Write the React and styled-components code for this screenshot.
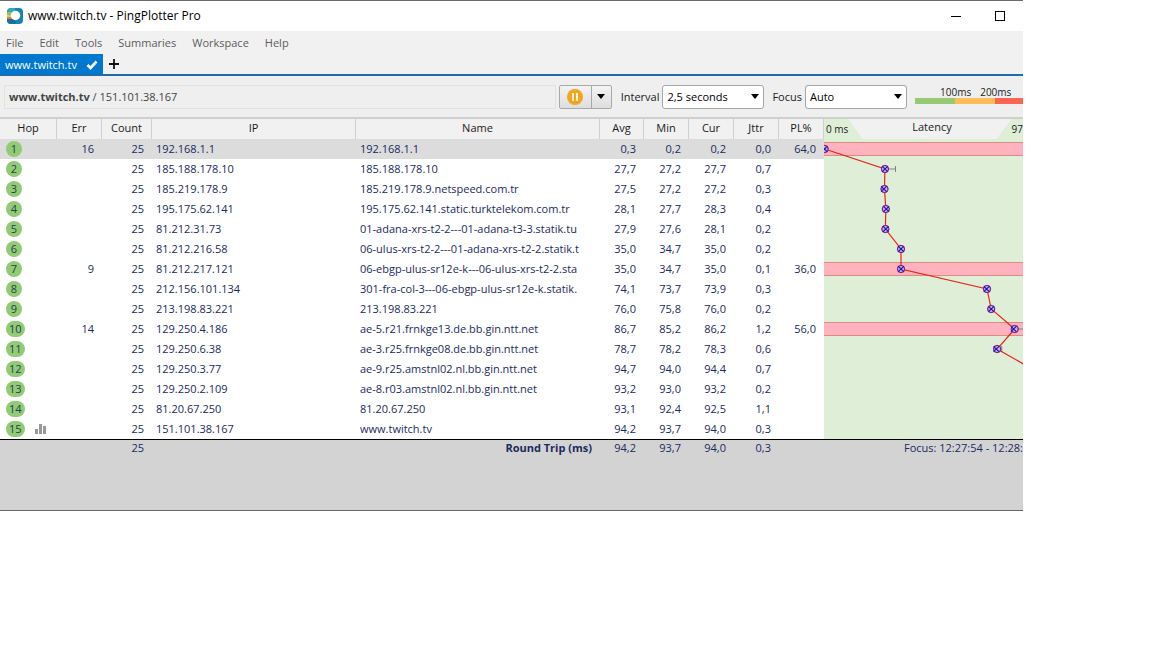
import React, { useState } from 'react';
import styled, { createGlobalStyle } from 'styled-components';

const GlobalStyle = createGlobalStyle`
  * {
    box-sizing: border-box;
  }

  body {
    margin: 0;
    background: #fff;
    font-family: 'Open Sans', 'Noto Sans', sans-serif;
    font-size: 11px;
    line-height: 20px;
    color: #1a1a1a;
  }

  button, input, select {
    font: inherit;
    color: inherit;
  }
`;

const PX_PER_MS = 2.2;
const ROW = 20;

const hops = [
  { err: '16', ip: '192.168.1.1', name: '192.168.1.1', avg: '0,3', min: '0,2', cur: '0,2', jttr: '0,0', pl: '64,0' },
  { ip: '185.188.178.10', name: '185.188.178.10', avg: '27,7', min: '27,2', cur: '27,7', jttr: '0,7', max: '32,5' },
  { ip: '185.219.178.9', name: '185.219.178.9.netspeed.com.tr', avg: '27,5', min: '27,2', cur: '27,2', jttr: '0,3' },
  { ip: '195.175.62.141', name: '195.175.62.141.static.turktelekom.com.tr', avg: '28,1', min: '27,7', cur: '28,3', jttr: '0,4' },
  { ip: '81.212.31.73', name: '01-adana-xrs-t2-2---01-adana-t3-3.statik.tu', avg: '27,9', min: '27,6', cur: '28,1', jttr: '0,2' },
  { ip: '81.212.216.58', name: '06-ulus-xrs-t2-2---01-adana-xrs-t2-2.statik.t', avg: '35,0', min: '34,7', cur: '35,0', jttr: '0,2' },
  { err: '9', ip: '81.212.217.121', name: '06-ebgp-ulus-sr12e-k---06-ulus-xrs-t2-2.sta', avg: '35,0', min: '34,7', cur: '35,0', jttr: '0,1', pl: '36,0' },
  { ip: '212.156.101.134', name: '301-fra-col-3---06-ebgp-ulus-sr12e-k.statik.', avg: '74,1', min: '73,7', cur: '73,9', jttr: '0,3' },
  { ip: '213.198.83.221', name: '213.198.83.221', avg: '76,0', min: '75,8', cur: '76,0', jttr: '0,2' },
  { err: '14', ip: '129.250.4.186', name: 'ae-5.r21.frnkge13.de.bb.gin.ntt.net', avg: '86,7', min: '85,2', cur: '86,2', jttr: '1,2', pl: '56,0', max: '96,0' },
  { ip: '129.250.6.38', name: 'ae-3.r25.frnkge08.de.bb.gin.ntt.net', avg: '78,7', min: '78,2', cur: '78,3', jttr: '0,6', max: '80,8' },
  { ip: '129.250.3.77', name: 'ae-9.r25.amstnl02.nl.bb.gin.ntt.net', avg: '94,7', min: '94,0', cur: '94,4', jttr: '0,7' },
  { ip: '129.250.2.109', name: 'ae-8.r03.amstnl02.nl.bb.gin.ntt.net', avg: '93,2', min: '93,0', cur: '93,2', jttr: '0,2' },
  { ip: '81.20.67.250', name: '81.20.67.250', avg: '93,1', min: '92,4', cur: '92,5', jttr: '1,1' },
  { ip: '151.101.38.167', name: 'www.twitch.tv', avg: '94,2', min: '93,7', cur: '94,0', jttr: '0,3', chart: true },
];

const toX = (ms) => parseFloat(ms.replace(',', '.')) * PX_PER_MS;

const Window = styled.main`
  margin-right: 129px;
  border-top: 1px solid #6b6b6b;
  border-bottom: 1px solid #66666f;
  background: #f1f1f1;
  overflow: hidden;
`;

const TitleBar = styled.header`
  display: flex;
  align-items: center;
  gap: 5px;
  height: 30px;
  padding: 0 17px 0 6px;
  background: #fff;
  color: #000;
`;

const Title = styled.h1`
  flex: 1;
  margin: 0;
  font-size: 12px;
  font-weight: 400;
`;

const WindowButton = styled.button`
  display: flex;
  padding: 0;
  border: 0;
  background: none;
  margin-left: 29px;
`;

const MenuBar = styled.nav`
  display: flex;
  gap: 16px;
  height: 23px;
  align-items: center;
  padding: 0 6px;
`;

const MenuLink = styled.a`
  color: #5c5c5c;
  text-decoration: none;
`;

const TabBar = styled.div`
  display: flex;
  align-items: stretch;
  height: 22px;
  border-bottom: 2px solid #1f6cab;
`;

const Tab = styled.button`
  display: flex;
  align-items: center;
  justify-content: space-between;
  width: 103px;
  padding: 2px 5px 0;
  border: 0;
  background: #0078d0;
  color: #fff;
`;

const AddTab = styled.button`
  display: flex;
  align-items: center;
  padding: 0 5px;
  border: 0;
  background: none;
`;

const Toolbar = styled.div`
  display: flex;
  align-items: center;
  height: 41px;
  padding-left: 4px;
  background: #efefef;
  white-space: nowrap;
`;

const Target = styled.div`
  flex: 1;
  height: 24px;
  padding: 0 4px;
  border: 1px solid #e2e2e2;
  line-height: 22px;
  color: #444;
`;

const SplitButton = styled.div`
  display: flex;
  height: 24px;
  margin: 0 9px 0 3px;
  border: 1px solid #a9a9a9;
  border-radius: 2px;
  background: linear-gradient(#f3f3f3, #dedede);
`;

const SplitPart = styled.button`
  display: flex;
  align-items: center;
  justify-content: center;
  width: ${(p) => p.$width}px;
  padding: 0;
  border: 0;
  border-left: ${(p) => (p.$divided ? '1px solid #a9a9a9' : '0')};
  background: none;
`;

const Field = styled.label`
  display: flex;
  align-items: center;
  gap: 3px;
  margin-right: 8px;
`;

const SelectBox = styled.select`
  appearance: none;
  width: 102px;
  height: 24px;
  padding: 0 4px;
  border: 1px solid #a6a6a6;
  border-radius: 3px;
  color: #000;
  background: #fff
    url("data:image/svg+xml,%3Csvg xmlns='http://www.w3.org/2000/svg' width='8' height='5'%3E%3Cpath d='M0 0h8L4 5z'/%3E%3C/svg%3E")
    no-repeat right 4px center;
`;

const Legend = styled.div`
  width: 108px;
  height: 24px;
  overflow: hidden;
  font-size: 10px;
  line-height: 12px;
`;

const LegendLabels = styled.div`
  display: flex;
  gap: 9px;
  padding: 1px 0 0 25px;
`;

const LegendBar = styled.div`
  height: 6px;
  background: linear-gradient(90deg, #96ca72 40px, #fbbd58 40px 80px, #fb6450 80px);
`;

const Trace = styled.section`
  display: flex;
  border-top: 2px solid #cfcfcf;
`;

const HopTable = styled.table`
  width: 824px;
  flex: none;
  table-layout: fixed;
  border-collapse: separate;
  border-spacing: 0;
  background: #fff;
  color: #1b2a5e;
`;

const HeadCell = styled.th`
  width: ${(p) => p.$width}px;
  height: 20px;
  padding: 0 0 2px;
  border-right: 1px solid #d0d0d0;
  background: #f1f1f1;
  color: #1a1a1a;
  font-weight: 400;
  line-height: 18px;
`;

const Row = styled.tr`
  background: ${(p) => (p.$selected ? '#dcdcdc' : '#fff')};
`;

const Cell = styled.td`
  height: ${ROW}px;
  padding: 0 8px 0 4px;
  overflow: hidden;
  line-height: ${ROW}px;
  white-space: nowrap;
  text-align: ${(p) => (p.$left ? 'left' : 'right')};
`;

const HopCell = styled.div`
  display: flex;
  align-items: center;
  gap: 10px;
  padding-left: 2px;
`;

const HopBadge = styled.span`
  min-width: 16px;
  height: 16px;
  padding: 0 3px;
  border-radius: 8px;
  background: #92cb74;
  color: #20405a;
  line-height: 15px;
  text-align: center;
`;

const Latency = styled.div`
  flex: 1;
  min-width: 0;
  overflow: hidden;
  background: #dfeed6;
`;

const LatencyHead = styled.div`
  display: flex;
  height: 20px;
  padding-left: 2px;
  font-size: 10px;
  white-space: nowrap;
`;

const LatencyTitle = styled.div`
  flex: 1;
  padding-left: 4px;
  background: #f1f1f1;
  clip-path: polygon(0 0, 100% 0, calc(100% - 15px) 100%, 14px 100%);
  font-size: 11px;
  line-height: 15px;
  text-align: center;
`;

const Graph = styled.svg`
  display: block;
  width: 100%;
  height: 300px;
`;

const Summary = styled.footer`
  display: flex;
  height: 71px;
  border-top: 1px solid #000;
  background: #d3d3d3;
  color: #1b2a5e;
  line-height: 16px;
  white-space: nowrap;
  overflow: hidden;
`;

const SummaryCell = styled.span`
  flex: none;
  width: ${(p) => p.$width}px;
  padding-right: 8px;
  font-weight: ${(p) => (p.$bold ? 700 : 400)};
  text-align: right;
`;

const FocusRange = styled.span`
  flex: 1;
  text-align: right;
`;

const DownArrow = () => (
  <svg width="8" height="5" viewBox="0 0 8 5">
    <path d="M0 0h8L4 5z" />
  </svg>
);

const Logo = () => (
  <svg width="17" height="17" viewBox="0 0 17 17">
    <rect x="1" y="0" width="16" height="16" rx="4" fill="#1783b5" />
    <path d="M1 5C1 2 3 0 5 0h4v5H1z" fill="#2fa9b4" />
    <path d="M1 4h6v3H1z" fill="#8fc265" />
    <path d="M1 7h6v2H1z" fill="#f3c256" />
    <path d="M1 9h6v2H1z" fill="#d9803f" />
    <path d="M1 11h9v5H5c-2 0-4-1-4-4z" fill="#1670a5" />
    <circle cx="9.5" cy="7.5" r="4.7" fill="#fff" />
  </svg>
);

const LatencyGraph = () => {
  const y = (i) => i * ROW + ROW / 2;

  return (
    <Graph role="img" aria-label="Latency by hop">
      {hops.map((hop, i) => hop.pl && (
        <g key={hop.ip}>
          <rect x="0" y={y(i) - 7} width="100%" height="14" fill="#ffb3be" />
          <path d={`M0 ${y(i) - 6.5}h4000M0 ${y(i) + 6.5}h4000`} stroke="#e08c7c" />
        </g>
      ))}
      {hops.map((hop, i) => hop.max && (
        <path
          key={hop.ip}
          d={`M${toX(hop.min)} ${y(i)}H${toX(hop.max)}m0 -3v6`}
          stroke="#7d857d"
          fill="none"
        />
      ))}
      <polyline
        points={hops.map((hop, i) => `${toX(hop.avg)},${y(i)}`).join(' ')}
        fill="none"
        stroke="#e8241c"
        strokeWidth="1.2"
      />
      {hops.map((hop, i) => (
        <g key={hop.ip}>
          <circle cx={toX(hop.avg)} cy={y(i)} r="3.7" fill="#c3b4e0" stroke="#c8205a" />
          <circle cx={toX(hop.avg)} cy={y(i)} r="3.5" fill="none" stroke="#4a22b0" strokeWidth="0.7" />
          <path
            d={`M${toX(hop.cur) - 2.7} ${y(i) - 2.7}l5.4 5.4m0 -5.4l-5.400 5.400`}
            stroke="#1410b8"
            strokeWidth="1.1"
          />
        </g>
      ))}
    </Graph>
  );
};

const App = () => {
  const [interval, setIntervalValue] = useState('2,5 seconds');
  const [focus, setFocus] = useState('Auto');

  return (
    <>
      <GlobalStyle />
      <Window>
        <TitleBar>
          <Logo />
          <Title>www.twitch.tv - PingPlotter Pro</Title>
          <WindowButton aria-label="Minimize">
            <svg width="10" height="11"><path d="M0 5.5h10" stroke="#000" /></svg>
          </WindowButton>
          <WindowButton aria-label="Maximize">
            <svg width="11" height="11"><rect x="0.5" y="0.5" width="9" height="9" fill="none" stroke="#000" /></svg>
          </WindowButton>
        </TitleBar>
        <MenuBar>
          {['File', 'Edit', 'Tools', 'Summaries', 'Workspace', 'Help'].map((item) => (
            <MenuLink key={item} href="#">{item}</MenuLink>
          ))}
        </MenuBar>
        <TabBar>
          <Tab>
            www.twitch.tv
            <svg width="12" height="10" viewBox="0 0 12 10">
              <path d="M1.5 5l3 3L10.5 1.5" fill="none" stroke="#fff" strokeWidth="2.6" />
            </svg>
          </Tab>
          <AddTab aria-label="New tab">
            <svg width="12" height="12" viewBox="0 0 12 12">
              <path d="M6 1v10M1 6h10" stroke="#111" strokeWidth="1.8" />
            </svg>
          </AddTab>
        </TabBar>
        <Toolbar>
          <Target><b>www.twitch.tv</b> / 151.101.38.167</Target>
          <SplitButton>
            <SplitPart $width={31} aria-label="Pause">
              <svg width="16" height="16" viewBox="0 0 16 16">
                <circle cx="8" cy="8" r="8" fill="#f3a51f" />
                <path d="M6 4v8M10 4v8" stroke="#fff3d8" strokeWidth="2" />
              </svg>
            </SplitPart>
            <SplitPart $width={20} $divided aria-label="Pause options"><DownArrow /></SplitPart>
          </SplitButton>
          <Field>
            Interval
            <SelectBox value={interval} onChange={(e) => setIntervalValue(e.target.value)}>
              <option>2,5 seconds</option>
              <option>5 seconds</option>
            </SelectBox>
          </Field>
          <Field>
            Focus
            <SelectBox value={focus} onChange={(e) => setFocus(e.target.value)}>
              <option>Auto</option>
              <option>10 minutes</option>
            </SelectBox>
          </Field>
          <Legend>
            <LegendLabels><span>100ms</span><span>200ms</span></LegendLabels>
            <LegendBar />
          </Legend>
        </Toolbar>
        <Trace>
          <HopTable>
            <thead>
              <tr>
                <HeadCell $width={57}>Hop</HeadCell>
                <HeadCell $width={45}>Err</HeadCell>
                <HeadCell $width={50}>Count</HeadCell>
                <HeadCell $width={204}>IP</HeadCell>
                <HeadCell $width={244}>Name</HeadCell>
                <HeadCell $width={44}>Avg</HeadCell>
                <HeadCell $width={45}>Min</HeadCell>
                <HeadCell $width={45}>Cur</HeadCell>
                <HeadCell $width={45}>Jttr</HeadCell>
                <HeadCell $width={45}>PL%</HeadCell>
              </tr>
            </thead>
            <tbody>
              {hops.map((hop, i) => (
                <Row key={hop.ip} $selected={i === 0}>
                  <Cell $left>
                    <HopCell>
                      <HopBadge>{i + 1}</HopBadge>
                      {hop.chart && (
                        <svg width="11" height="10" viewBox="0 0 11 10">
                          <path d="M0 5h3v5H0zM4 0h3v10H4zM8 2h3v8H8z" fill="#999" />
                        </svg>
                      )}
                    </HopCell>
                  </Cell>
                  <Cell>{hop.err}</Cell>
                  <Cell>25</Cell>
                  <Cell $left>{hop.ip}</Cell>
                  <Cell $left>{hop.name}</Cell>
                  <Cell>{hop.avg}</Cell>
                  <Cell>{hop.min}</Cell>
                  <Cell>{hop.cur}</Cell>
                  <Cell>{hop.jttr}</Cell>
                  <Cell>{hop.pl}</Cell>
                </Row>
              ))}
            </tbody>
          </HopTable>
          <Latency>
            <LatencyHead>
              <span>0 ms</span>
              <LatencyTitle>Latency</LatencyTitle>
              <span>97</span>
            </LatencyHead>
            <LatencyGraph />
          </Latency>
        </Trace>
        <Summary>
          <SummaryCell $width={152}>25</SummaryCell>
          <SummaryCell $width={448} $bold>Round Trip (ms)</SummaryCell>
          <SummaryCell $width={44}>94,2</SummaryCell>
          <SummaryCell $width={45}>93,7</SummaryCell>
          <SummaryCell $width={45}>94,0</SummaryCell>
          <SummaryCell $width={45}>0,3</SummaryCell>
          <SummaryCell $width={45} />
          <FocusRange>Focus: 12:27:54 - 12:28:</FocusRange>
        </Summary>
      </Window>
    </>
  );
};

export default App;
